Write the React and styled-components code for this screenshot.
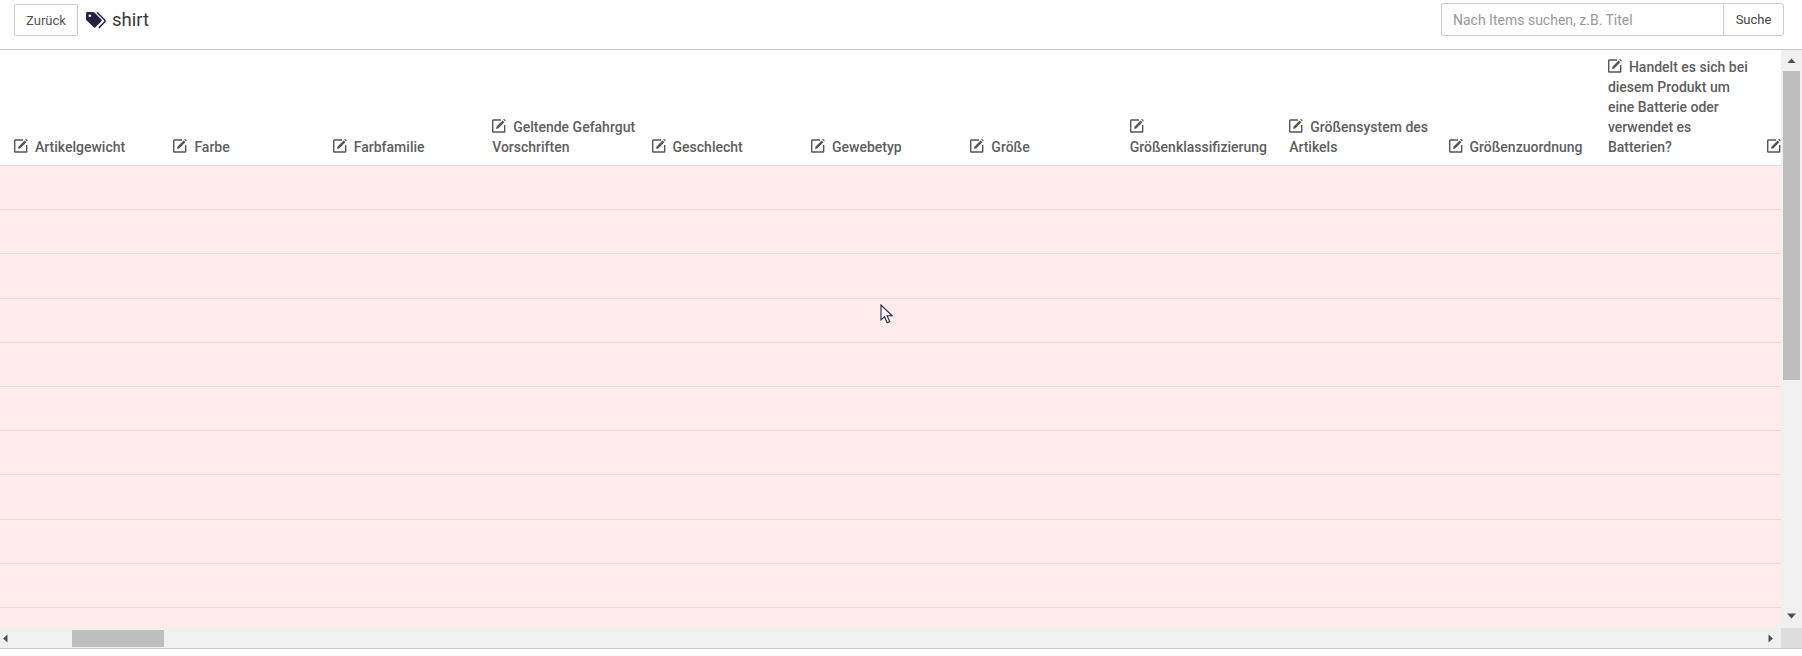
import React from 'react';
import styled, { createGlobalStyle } from 'styled-components';

const GlobalStyle = createGlobalStyle`
  html, body {
    margin: 0;
    padding: 0;
    background: #fff;
    overflow: hidden;
  }
  body {
    font-family: Roboto, "Liberation Sans", sans-serif;
  }
`;

const Page = styled.div`
  width: 1802px;
  height: 656px;
  display: flex;
  flex-direction: column;
  overflow: hidden;
`;

const TopBar = styled.header`
  height: 50px;
  flex: none;
  box-sizing: border-box;
  padding: 4px 14px 0;
  display: flex;
  align-items: flex-start;
  justify-content: space-between;
  border-bottom: 1px solid #ccc;
`;

const TitleGroup = styled.div`
  display: flex;
  align-items: center;
`;

const BackButton = styled.button`
  width: 64px;
  height: 32px;
  padding: 0;
  background: #fff;
  border: 1px solid #ccc;
  border-radius: 2px;
  color: #555;
  font: 400 13px Roboto, sans-serif;
`;

const Title = styled.h1`
  margin: 0 0 0 8px;
  display: flex;
  align-items: center;
  gap: 5px;
  font-size: 18.5px;
  font-weight: 400;
  color: #3a3a3a;
`;

const SearchGroup = styled.div`
  display: flex;
  height: 33px;
  margin-top: -1px;
  margin-right: 4px;
`;

const SearchInput = styled.input`
  width: 282px;
  box-sizing: border-box;
  padding: 0 11px;
  border: 1px solid #ccc;
  border-right: none;
  border-radius: 3px 0 0 3px;
  font: 400 14px Roboto, sans-serif;
  outline: none;
  &::placeholder {
    color: #999;
    opacity: 1;
  }
`;

const SearchButton = styled.button`
  width: 61px;
  padding: 0;
  background: #fff;
  border: 1px solid #ccc;
  border-radius: 0 3px 3px 0;
  color: #444;
  font: 400 13px Roboto, sans-serif;
`;

const TableFrame = styled.div`
  flex: none;
  height: 599px;
  box-sizing: border-box;
  display: grid;
  grid-template-columns: 1781px 21px;
  grid-template-rows: 578px 20px;
  border-bottom: 1px solid #ccc;
`;

const TableArea = styled.div`
  overflow: hidden;
`;

const HeadRow = styled.div`
  height: 116px;
  display: grid;
  grid-template-columns: repeat(12, 159.4px);
  box-sizing: border-box;
  border-bottom: 1px solid #ddd;
`;

const HeadCell = styled.div`
  align-self: end;
  box-sizing: border-box;
  padding: 0 0 8px 14px;
  font-size: 14px;
  font-weight: 500;
  line-height: 20px;
  color: #5e5e5e;
`;

const EditMark = styled.svg`
  width: 15px;
  height: 15px;
  margin-right: 6px;
  vertical-align: -1px;
`;

const Row = styled.div`
  height: 44.2px;
  box-sizing: border-box;
  background: #feecec;
  border-bottom: 1px solid #ddd;
`;

const VerticalBar = styled.div`
  background: #f0f0f0;
  display: flex;
  flex-direction: column;
  align-items: center;
`;

const VerticalThumb = styled.div`
  width: 17px;
  height: 309px;
  flex: none;
  background: #bebebe;
`;

const ArrowBox = styled.div`
  height: 21px;
  flex: none;
  margin-top: ${props => (props.$end ? 'auto' : '0')};
  display: flex;
  align-items: center;
  justify-content: center;
`;

const HorizontalBar = styled.div`
  background: #f0f0f0;
  display: flex;
  align-items: center;
  padding: 0 6px 0 1px;
`;

const HorizontalThumb = styled.div`
  width: 92px;
  height: 17px;
  margin-left: 62px;
  margin-right: auto;
  background: #bebebe;
`;

const Corner = styled.div`
  background: #dcdcdc;
`;

const Cursor = styled.svg`
  position: absolute;
  left: 880px;
  top: 304px;
  width: 14px;
  height: 21px;
`;

const columns = [
  'Artikelgewicht',
  'Farbe',
  'Farbfamilie',
  'Geltende Gefahrgut Vorschriften',
  'Geschlecht',
  'Gewebetyp',
  'Größe',
  'Größenklassifizierung',
  'Größensystem des Artikels',
  'Größenzuordnung',
  'Handelt es sich bei diesem Produkt um eine Batterie oder verwendet es Batterien?',
  '',
];

const rowIds = Array.from({ length: 11 }, (_, i) => i);

const TagsIcon = () => (
  <svg width="21" height="17" viewBox="0 0 21 17">
    <path d="M0 1.6C0 .7.7 0 1.6 0h5.6c.5 0 .9.2 1.2.5l6.8 6.8c.7.7.7 1.7 0 2.3l-5.5 5.5c-.7.7-1.7.7-2.3 0L.5 8.3C.2 8 0 7.6 0 7.1z" fill="#23233f" />
    <circle cx="3.8" cy="3.8" r="1.3" fill="#fff" />
    <path d="M11 .3l7.4 7.4c.9.9.9 1.7 0 2.6l-5.6 5.6" fill="none" stroke="#23233f" strokeWidth="1.5" />
  </svg>
);

const EditIcon = () => (
  <EditMark viewBox="0 0 15 15">
    <path d="M9 2H1.2a.5.5 0 0 0-.5.5v11a.5.5 0 0 0 .5.5h11a.5.5 0 0 0 .5-.5V7" fill="none" stroke="#555" strokeWidth="1.4" />
    <path d="M4.4 8.8L10.6 2.4 12.4 4.2 6.2 10.6 4.2 11z" fill="#555" />
    <path d="M11.2 1.6L12 .8 13.8 2.6 13 3.4z" fill="#555" />
  </EditMark>
);

const Triangle = ({ points }) => (
  <svg width="9" height="9" viewBox="0 0 9 9">
    <polygon points={points} fill="#505050" />
  </svg>
);

const App = () => (
  <Page>
    <GlobalStyle />
    <TopBar>
      <TitleGroup>
        <BackButton>Zurück</BackButton>
        <Title>
          <TagsIcon />
          shirt
        </Title>
      </TitleGroup>
      <SearchGroup>
        <SearchInput placeholder="Nach Items suchen, z.B. Titel" />
        <SearchButton>Suche</SearchButton>
      </SearchGroup>
    </TopBar>
    <TableFrame>
      <TableArea>
        <HeadRow>
          {columns.map((name, i) => (
            <HeadCell key={i}>
              <EditIcon />
              {name}
            </HeadCell>
          ))}
        </HeadRow>
        {rowIds.map(id => (
          <Row key={id} />
        ))}
      </TableArea>
      <VerticalBar>
        <ArrowBox>
          <Triangle points="0.5,7 4.5,2.5 8.5,7" />
        </ArrowBox>
        <VerticalThumb />
        <ArrowBox $end>
          <Triangle points="0,0.5 9,0.5 4.5,5.5" />
        </ArrowBox>
      </VerticalBar>
      <HorizontalBar>
        <Triangle points="6.5,0.5 6.5,8.5 2,4.5" />
        <HorizontalThumb />
        <Triangle points="2.5,0.5 2.5,8.5 7,4.5" />
      </HorizontalBar>
      <Corner />
    </TableFrame>
    <Cursor viewBox="0 0 14 21">
      <path d="M1 1v15l3.5-3.3 2.6 6 2.6-1.1-2.6-5.8h5z" fill="#fff" stroke="#23233f" strokeWidth="1.1" />
    </Cursor>
  </Page>
);

export default App;
